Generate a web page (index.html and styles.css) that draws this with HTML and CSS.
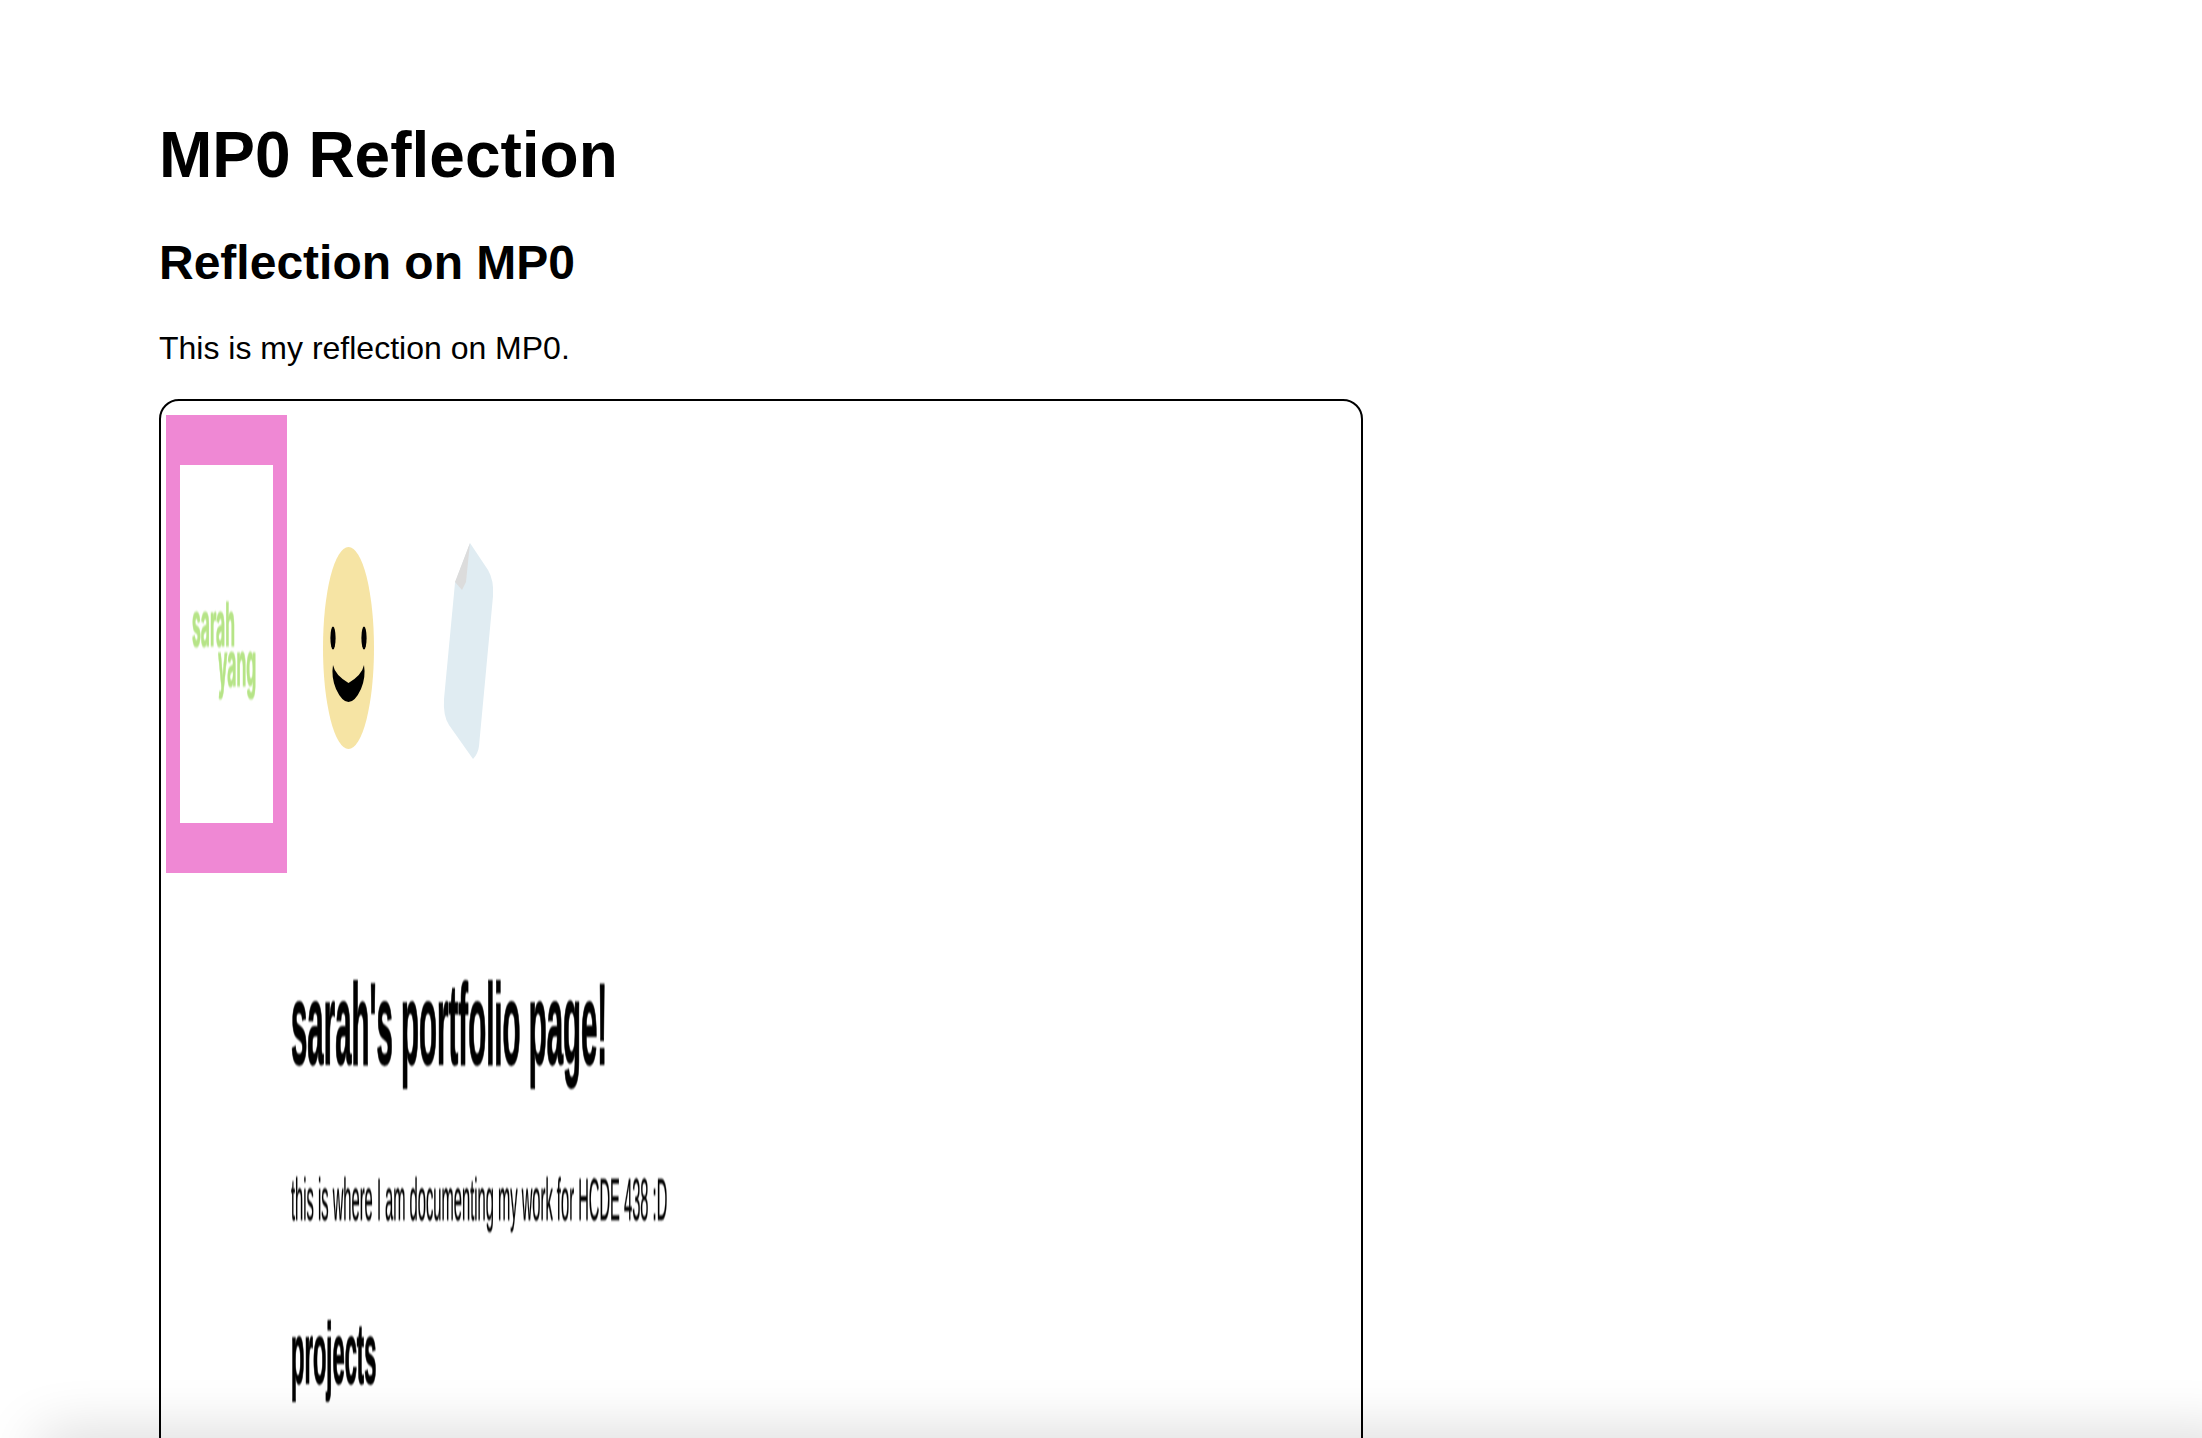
FILE: index.html
```html
<!DOCTYPE html>
<html lang="en">
<head>
    <meta charset="UTF-8">
    <title>MP0 Reflection</title>
    <link rel="stylesheet" href="styles.css">
</head>
<body>
    <main class="page">
        <h1>MP0 Reflection</h1>
        <h2>Reflection on MP0</h2>
        <p class="intro">This is my reflection on MP0.</p>

        <div class="embed">
            <div class="embed-top">
                <div class="logo-box">
                    <div class="logo-inner">
                        <span class="logo-line">sarah</span>
                        <span class="logo-line logo-line-right">yang</span>
                    </div>
                </div>
                <svg class="smiley" viewBox="0 0 51 202" aria-hidden="true">
                    <ellipse cx="25.5" cy="101" rx="25.5" ry="101" fill="#f6e4a4"/>
                    <ellipse cx="10" cy="91" rx="2.6" ry="11.5" fill="#000"/>
                    <ellipse cx="41" cy="91" rx="2.6" ry="11.5" fill="#000"/>
                    <path d="M10 118 Q12 128 25.5 136 Q39 128 41 118 Q43 130 38 142 Q32 155 25.5 155 Q19 155 13 142 Q8 130 10 118 Z" fill="#000"/>
                </svg>
                <svg class="paper" viewBox="0 0 52 218" aria-hidden="true">
                    <path d="M27 1 L45 28 Q51 38 50 54 L36 204 Q35 212 30 217 L6 183 Q0 174 1 157 L12 41 Z" fill="#e0ecf2"/>
                    <path d="M27 1 L12 40 L19 48 L23 40 Z" fill="#dcdcdc"/>
                </svg>
            </div>
            <div class="embed-body">
                <h1 class="squeezed squeezed-title">sarah's portfolio page!</h1>
                <p class="squeezed squeezed-text">this is where I am documenting my work for HCDE 438 :D</p>
                <h2 class="squeezed squeezed-sub">projects</h2>
            </div>
        </div>
    </main>
    <div class="window-edge"></div>
</body>
</html>
```

FILE: styles.css
```css
html, body {
    height: 100%;
}

body {
    margin: 0;
    overflow: hidden;
    background-color: #fff;
    color: #000;
    font-family: "Liberation Sans", Arial, sans-serif;
}

.page {
    padding: 118px 0 0 159px;
}

.page > h1 {
    margin: 0;
    font-size: 64px;
    line-height: 74px;
    font-weight: bold;
}

.page > h2 {
    margin: 43px 0 0;
    font-size: 48px;
    line-height: 55px;
    font-weight: bold;
}

.intro {
    margin: 40px 0 0;
    font-size: 32px;
    line-height: 37px;
}

.embed {
    box-sizing: border-box;
    width: 1204px;
    height: 1100px;
    margin-top: 32px;
    border: 2px solid #000;
    border-radius: 20px;
    overflow: hidden;
}

.embed-top {
    display: flex;
    align-items: flex-start;
    padding: 14px 0 0 5px;
}

.logo-box {
    box-sizing: border-box;
    width: 121px;
    height: 458px;
    padding: 50px 14px;
    background-color: #ef88d4;
    flex-shrink: 0;
    filter: blur(0.4px);
}

.logo-inner {
    height: 358px;
    padding-top: 130px;
    box-sizing: border-box;
    background-color: #fff;
}

.logo-line {
    display: block;
    width: max-content;
    height: 40px;
    margin-left: 12px;
    color: #b6e487;
    font-family: Inter, sans-serif;
    font-size: 32px;
    line-height: 32px;
    font-weight: 700;
    -webkit-text-stroke: 0.6px #b6e487;
    transform: scale(0.49, 1.9);
    transform-origin: left top;
    filter: blur(0.5px);
}

.logo-line-right {
    margin-left: 38px;
}

.smiley {
    width: 51px;
    height: 202px;
    margin: 132px 0 0 36px;
    flex-shrink: 0;
    filter: blur(0.4px);
}

.paper {
    width: 52px;
    height: 218px;
    margin: 127px 0 0 69px;
    flex-shrink: 0;
    filter: blur(0.4px);
}

.embed-body {
    padding: 85px 0 0 130px;
}

/* text in the embedded preview is stretched like a resized picture */
.squeezed {
    width: max-content;
    margin: 0;
    transform-origin: left top;
    filter: blur(0.7px);
}

.squeezed-title {
    font-size: 64px;
    line-height: 74px;
    -webkit-text-stroke: 1px #000;
    transform: scale(0.46, 1.8);
}

.squeezed-text {
    margin-top: 134px;
    font-size: 32px;
    line-height: 37px;
    font-weight: normal;
    -webkit-text-stroke: 0.3px #000;
    transform: scale(0.46, 1.85);
}

.squeezed-sub {
    margin-top: 102px;
    font-size: 48px;
    line-height: 55px;
    -webkit-text-stroke: 1px #000;
    transform: scale(0.457, 1.78);
}

/* soft shadow of the window lying just under the bottom edge */
.window-edge {
    position: fixed;
    left: 40px;
    right: -40px;
    top: 1438px;
    height: 40px;
    box-shadow: 0 0 60px rgba(0, 0, 0, 0.2);
}
```
